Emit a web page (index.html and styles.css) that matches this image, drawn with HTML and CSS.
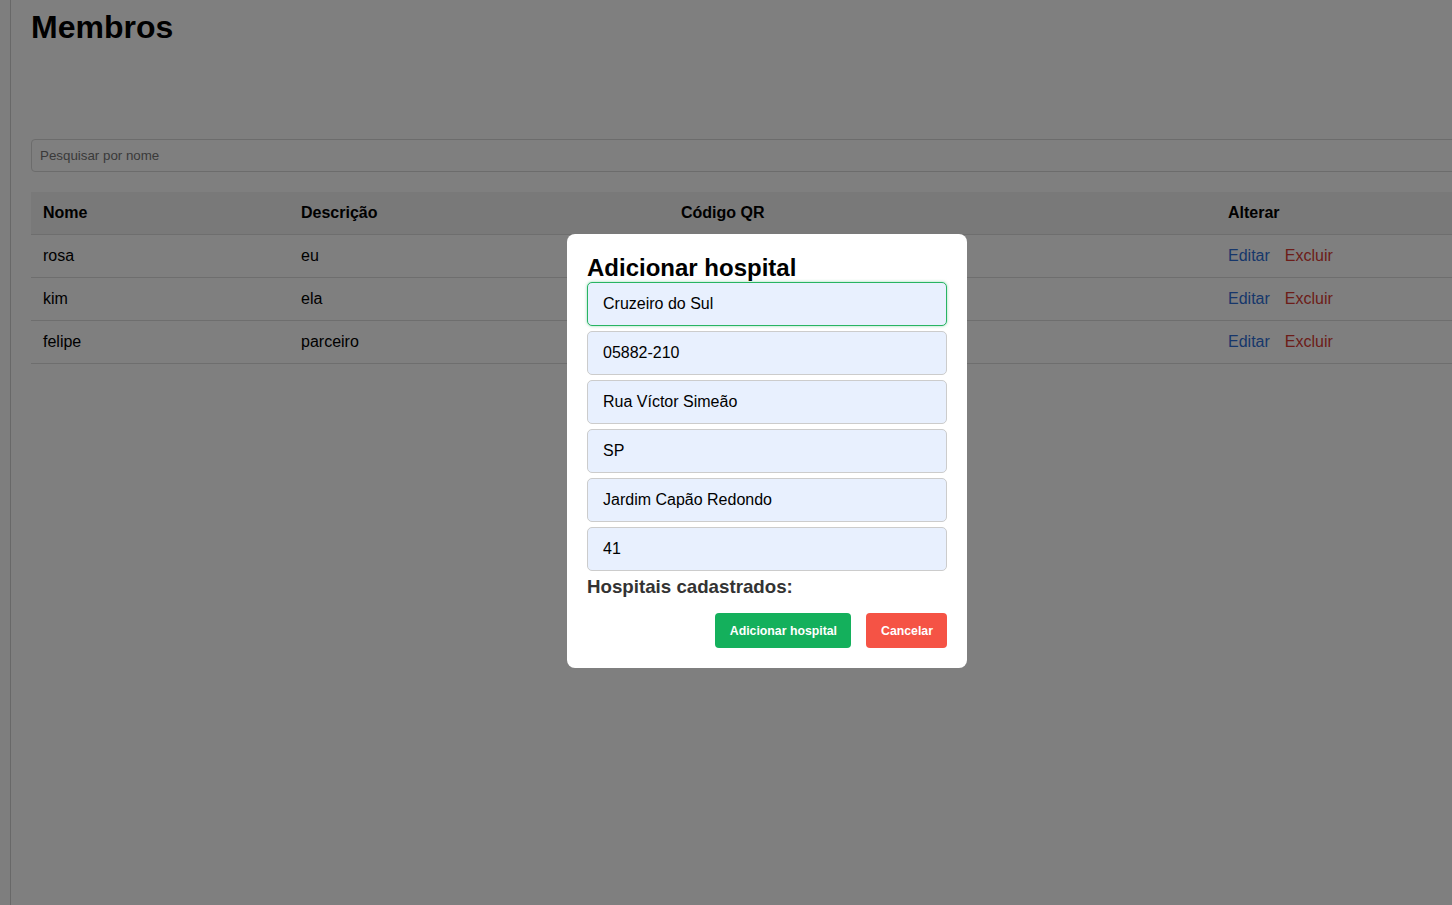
FILE: index.html
```html
<!DOCTYPE html>
<html lang="pt">
<head>
<meta charset="utf-8">
<title>Membros</title>
<link rel="stylesheet" href="styles.css">
</head>
<body>
<div class="layout">
  <aside class="sidebar"></aside>
  <main class="main">
    <h1 class="title">Membros</h1>
    <input class="search" type="text" placeholder="Pesquisar por nome">
    <table class="table">
      <thead>
        <tr>
          <th class="c1">Nome</th>
          <th class="c2">Descrição</th>
          <th class="c3">Código QR</th>
          <th class="c4">Alterar</th>
        </tr>
      </thead>
      <tbody>
        <tr><td>rosa</td><td>eu</td><td></td><td><a class="edit">Editar</a><a class="del">Excluir</a></td></tr>
        <tr><td>kim</td><td>ela</td><td></td><td><a class="edit">Editar</a><a class="del">Excluir</a></td></tr>
        <tr><td>felipe</td><td>parceiro</td><td></td><td><a class="edit">Editar</a><a class="del">Excluir</a></td></tr>
      </tbody>
    </table>
  </main>
</div>

<div class="overlay">
  <div class="modal">
    <h2 class="modal-title">Adicionar hospital</h2>
    <div class="field focused">Cruzeiro do Sul</div>
    <div class="field">05882-210</div>
    <div class="field">Rua Víctor Simeão</div>
    <div class="field">SP</div>
    <div class="field">Jardim Capão Redondo</div>
    <div class="field">41</div>
    <h3 class="subtitle">Hospitais cadastrados:</h3>
    <div class="actions">
      <button class="btn btn-add">Adicionar hospital</button>
      <button class="btn btn-cancel">Cancelar</button>
    </div>
  </div>
</div>
</body>
</html>
```

FILE: styles.css
```css
html, body {
  margin: 0;
  padding: 0;
  height: 100%;
  overflow: hidden;
}
body {
  font-family: "Liberation Sans", Arial, sans-serif;
  background: #ffffff;
  color: #000;
}
.layout {
  display: flex;
  min-height: 100vh;
  width: 1600px;
}
.sidebar {
  width: 10px;
  flex: none;
  background: #fdfdfd;
  border-right: 1px solid #d0d0d0;
}
.main {
  flex: 1;
  padding: 9px 20px 20px 20px;
  display: flex;
  flex-direction: column;
  align-items: flex-start;
}
.title {
  margin: 0;
  font-size: 32px;
  font-weight: bold;
}
.search {
  margin-top: 93px;
  box-sizing: border-box;
  width: 100%;
  height: 33px;
  padding: 0 8px;
  font-family: "Liberation Sans", Arial, sans-serif;
  font-size: 13.33px;
  border: 1px solid #d8d8d8;
  border-radius: 4px;
  background: #fff;
}
.search::placeholder {
  color: #757575;
}
.table {
  margin-top: 20px;
  width: 100%;
  border-collapse: collapse;
  font-size: 16px;
}
.table th, .table td {
  text-align: left;
  padding: 12px 12px;
  border-bottom: 1px solid #dddddd;
  height: 18px;
}
.table thead th {
  background: #f2f2f2;
  font-weight: bold;
}
.c1 { width: 234px; }
.c2 { width: 356px; }
.c3 { width: 523px; }
.edit {
  color: #2f6fd6;
  margin-right: 15px;
  cursor: pointer;
}
.del {
  color: #d93a32;
  cursor: pointer;
}

.overlay {
  position: fixed;
  inset: 0;
  background: rgba(0, 0, 0, 0.5);
  display: flex;
  align-items: flex-start;
  justify-content: center;
  padding-top: 234px;
  padding-left: 82px;
}
.modal {
  box-sizing: border-box;
  width: 400px;
  background: #fff;
  border-radius: 8px;
  padding: 20px;
}
.modal-title {
  margin: 0;
  font-size: 24px;
  font-weight: bold;
}
.field {
  box-sizing: border-box;
  height: 44px;
  margin-bottom: 5px;
  padding: 0 15px;
  display: flex;
  align-items: center;
  font-size: 16px;
  background: #e8f0fe;
  border: 1px solid #cccccc;
  border-radius: 5px;
  color: #000;
}
.field.focused {
  border-color: #28b463;
  box-shadow: 0 0 3px rgba(40, 180, 99, 0.5);
}
.subtitle {
  margin: 4px 0 15px 0;
  font-size: 18.72px;
  font-weight: bold;
  color: #333333;
}
.actions {
  display: flex;
  justify-content: flex-end;
  gap: 15px;
}
.btn {
  height: 35px;
  border: none;
  border-radius: 4px;
  color: #fff;
  font-family: "Liberation Sans", Arial, sans-serif;
  font-size: 12.3px;
  font-weight: bold;
  padding: 0 14px 0 15px;
  cursor: pointer;
}
.btn-add {
  background: #14b05c;
}
.btn-cancel {
  background: #f55345;
}
```
